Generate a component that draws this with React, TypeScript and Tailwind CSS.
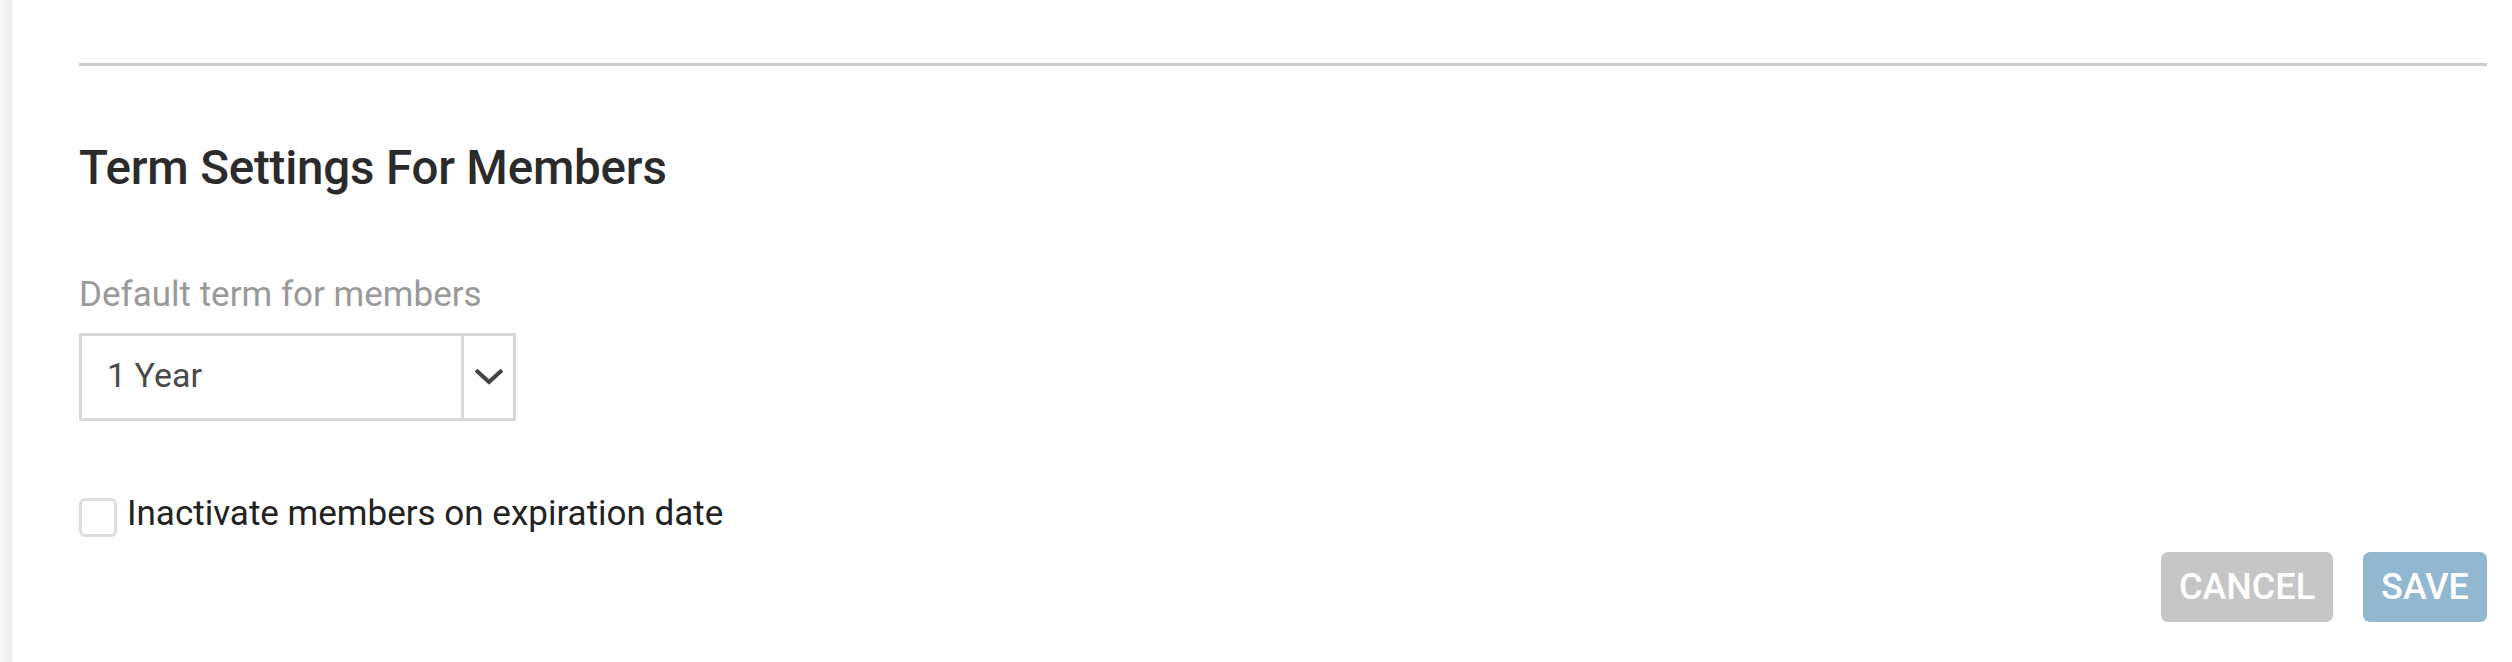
import React from "react";

const font = { fontFamily: "Roboto, 'Noto Sans', sans-serif" };

const Chevron: React.FC = () => (
  <svg width="28" height="16" viewBox="0 0 28 16" fill="none">
    <polyline
      points="2.5,2.5 14,13 25.5,2.5"
      stroke="#444"
      strokeWidth="4"
      strokeLinecap="square"
      strokeLinejoin="miter"
    />
  </svg>
);

const App: React.FC = () => {
  return (
    <div className="flex h-[662px] w-full bg-white" style={font}>
      <div className="w-[12px] shrink-0 bg-gradient-to-r from-[#fafafa] to-[#ebebeb]" />
      <div className="flex flex-1 flex-col pl-[67px] pr-[25px] pt-[63px]">
        <div className="h-[3px] w-full bg-[#cccccc]" />

        <h2 className="mt-[72px] text-[47.5px] leading-[60px] font-medium tracking-[-0.2px] text-[#2b2b2b]">
          Term Settings For Members
        </h2>

        <label className="mt-[77px] text-[35px] leading-[40px] text-[#999999]">
          Default term for members
        </label>

        <div className="mt-[18px] flex h-[88px] w-[437px] border-[3px] border-[#d9d9d9]">
          <div className="flex flex-1 items-center pb-[4px] pl-[25px] text-[34px] text-[#4a4a4a]">
            1 Year
          </div>
          <div className="flex w-[52px] items-center justify-center border-l-[3px] border-[#d9d9d9]">
            <Chevron />
          </div>
        </div>

        <div className="mt-[73px] flex items-start gap-[10px]">
          <div className="mt-[4px] h-[39px] w-[38px] rounded-[6px] border-[3px] border-[#dddddd] bg-white" />
          <span className="text-[35px] leading-[40px] text-[#222222]">
            Inactivate members on expiration date
          </span>
        </div>

        <div className="mt-[15px] flex justify-end gap-[30px]">
          <button className="flex h-[70px] w-[172px] items-center justify-center rounded-[7px] bg-[#c6c6c6] text-[36px] font-medium text-white">
            CANCEL
          </button>
          <button className="flex h-[70px] w-[124px] items-center justify-center rounded-[7px] bg-[#91b7d1] text-[36px] font-medium text-white">
            SAVE
          </button>
        </div>
      </div>
    </div>
  );
};

export default App;
